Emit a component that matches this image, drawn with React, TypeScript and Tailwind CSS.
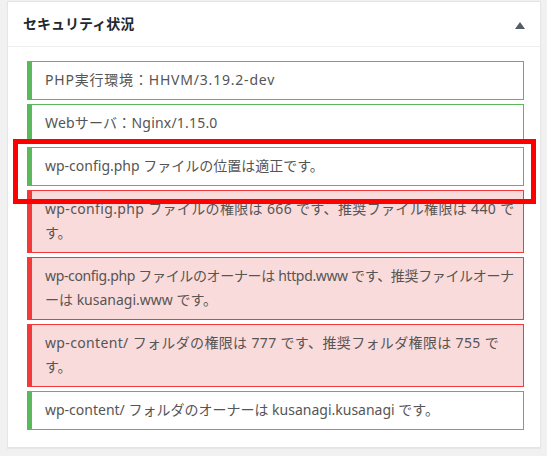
import React from "react";

type Line = { t: string; c?: string };
type Item = { ok: boolean; lines: Line[] };

const items: Item[] = [
  { ok: true, lines: [{ t: "PHP実行環境：HHVM/3.19.2-dev", c: "tracking-[0.8px]" }] },
  { ok: true, lines: [{ t: "Webサーバ：Nginx/1.15.0", c: "tracking-[0.2px]" }] },
  { ok: true, lines: [{ t: "wp-config.php ファイルの位置は適正です。" }] },
  {
    ok: false,
    lines: [
      { t: "wp-config.php ファイルの権限は 666 です、推奨ファイル権限は 440 で", c: "tracking-[0.35px]" },
      { t: "す。" },
    ],
  },
  {
    ok: false,
    lines: [
      { t: "wp-config.php ファイルのオーナーは httpd.www です、推奨ファイルオーナ", c: "tracking-[-0.35px]" },
      { t: "ーは kusanagi.www です。" },
    ],
  },
  {
    ok: false,
    lines: [
      { t: "wp-content/ フォルダの権限は 777 です、推奨フォルダ権限は 755 で", c: "tracking-[0.35px]" },
      { t: "す。" },
    ],
  },
  { ok: true, lines: [{ t: "wp-content/ フォルダのオーナーは kusanagi.kusanagi です。" }] },
];

export default function App() {
  return (
    <div
      className="relative w-full h-[456px] bg-[#f1f1f1] pt-[1px] overflow-hidden"
      style={{ fontFamily: '"Noto Sans", "Noto Sans CJK JP", sans-serif' }}
    >
      <div className="ml-[7px] w-[534px] bg-white border border-[#e5e5e5] shadow-[0_1px_1px_rgba(0,0,0,0.04)]">
        <div className="flex items-center justify-between h-[45px] border-b border-[#eeeeee] pl-[15px] pr-[15px]">
          <h2 className="text-[14px] font-bold text-[#23282d] leading-none">セキュリティ状況</h2>
          <svg width="10" height="7" viewBox="0 0 10 7" className="mt-[2px]">
            <polygon points="5,0 10,7 0,7" fill="#555d66" />
          </svg>
        </div>
        <div className="pl-[19px] pr-[16px] pt-[14px] pb-[17px] flex flex-col gap-[4px]">
          {items.map((it, i) => (
            <div
              key={i}
              className={
                it.ok
                  ? "border border-l-[5px] border-[#5cb85c] bg-white pl-[13px] pr-[10px] pt-[6px] pb-[7px] text-[14px] leading-[24px] text-[#555555] whitespace-nowrap"
                  : "border border-l-[5px] border-[#f33a3a] bg-[#fadbdb] pl-[13px] pr-[10px] pt-[6px] pb-[7px] text-[14px] leading-[24px] text-[#555555] whitespace-nowrap"
              }
            >
              {it.lines.map((l, j) => (
                <div key={j} className={l.c}>
                  {l.t}
                </div>
              ))}
            </div>
          ))}
        </div>
      </div>
      <div className="absolute left-[13px] top-[139px] w-[523px] h-[65px] border-[5px] border-[#ff0000] pointer-events-none" />
    </div>
  );
}
